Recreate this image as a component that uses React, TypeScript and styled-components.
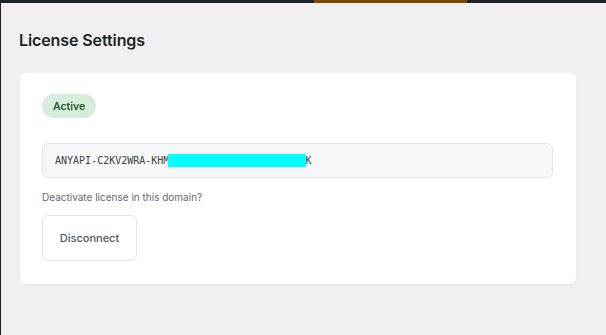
import React from "react";
import styled, { createGlobalStyle } from "styled-components";

const Global = createGlobalStyle`
  html, body { margin: 0; padding: 0; background: #f0f0f0; }
  body { font-family: Inter, "Noto Sans", "Liberation Sans", sans-serif; }
  * { box-sizing: border-box; }
`;

const Page = styled.div`
  display: flex;
  flex-direction: column;
  min-height: 100vh;
  border-left: 1px solid #1d2327;
  background: #f0f0f0;
`;

const TopBar = styled.div`
  height: 3px;
  background: #1d2327;
  display: flex;
`;

const ActiveTab = styled.div`
  margin-left: 313px;
  width: 153px;
  background: #7b4a00;
`;

const Content = styled.main`
  display: flex;
  flex-direction: column;
  padding: 27px 30px 0 19px;
`;

const Title = styled.h1`
  margin: 0 0 23px -1px;
  font-size: 16px;
  line-height: 20px;
  font-weight: 600;
  color: #1d2327;
  letter-spacing: -0.1px;
`;

const Card = styled.section`
  background: #ffffff;
  border-radius: 6px;
  box-shadow: 0 1px 2px rgba(0, 0, 0, 0.06);
  padding: 21px 23px 23px 22px;
  display: flex;
  flex-direction: column;
  align-items: flex-start;
`;

const Badge = styled.span<{ $tone: "success" }>`
  display: inline-flex;
  align-items: center;
  height: 24px;
  padding: 0 11px;
  border-radius: 12px;
  background: ${(p) => (p.$tone === "success" ? "#d6eddc" : "#eee")};
  color: ${(p) => (p.$tone === "success" ? "#1f5a30" : "#333")};
  font-size: 10.5px;
  font-weight: 600;
`;

const KeyField = styled.div`
  margin-top: 25px;
  align-self: stretch;
  height: 35px;
  display: flex;
  align-items: center;
  padding: 0 12px;
  background: #f6f7f8;
  border: 1px solid #e3e6e9;
  border-radius: 6px;
  font-family: "DejaVu Sans Mono", "Liberation Mono", monospace;
  font-size: 10px;
  color: #3c434a;
  white-space: pre;
`;

const Redaction = styled.span`
  position: relative;
  display: inline-block;
  width: 138px;
  height: 13px;
  margin: 0 -7px 0 -1px;
  background: #00ffff;
`;

const Hint = styled.p`
  margin: 12px 0 0;
  font-size: 10px;
  line-height: 14px;
  color: #646970;
`;

const Button = styled.button`
  margin-top: 11px;
  width: 95px;
  height: 46px;
  background: #ffffff;
  border: 1px solid #e2e4e7;
  border-radius: 6px;
  font-family: inherit;
  font-size: 11px;
  font-weight: 500;
  color: #50575e;
  cursor: pointer;
`;

export default function App() {
  return (
    <>
      <Global />
      <Page>
        <TopBar>
          <ActiveTab />
        </TopBar>
        <Content>
          <Title>License Settings</Title>
          <Card>
            <Badge $tone="success">Active</Badge>
            <KeyField>
              <span>ANYAPI-C2KV2WRA-KHM</span>
              <Redaction />
              <span>EK</span>
            </KeyField>
            <Hint>Deactivate license in this domain?</Hint>
            <Button>Disconnect</Button>
          </Card>
        </Content>
      </Page>
    </>
  );
}
